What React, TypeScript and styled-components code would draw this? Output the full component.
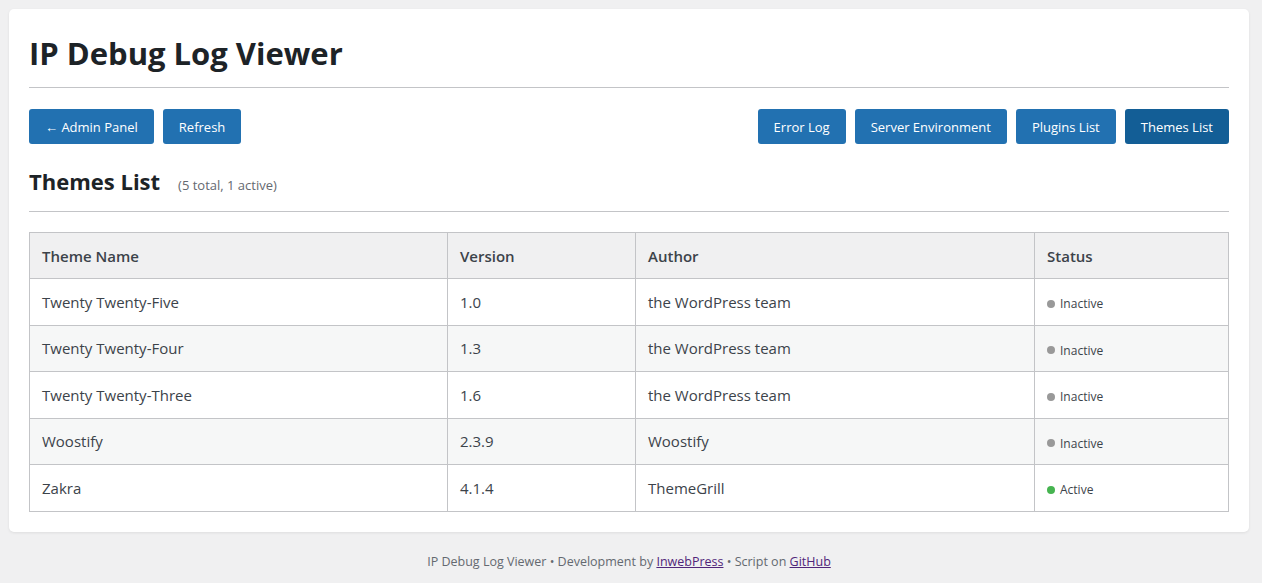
import React from "react";
import styled, { createGlobalStyle } from "styled-components";

const Global = createGlobalStyle`
  html, body { margin: 0; padding: 0; }
  body {
    background: #f0f0f1;
    font-family: "Segoe UI", "Open Sans", "Noto Sans", sans-serif;
    color: #3c434a;
  }
`;

const Page = styled.div`
  padding: 9px 13px 0 9px;
`;

const Card = styled.div`
  background: #fff;
  border-radius: 5px;
  box-shadow: 0 1px 3px rgba(0, 0, 0, 0.08);
  padding: 20px;
`;

const Title = styled.h1`
  margin: 0;
  padding: 5px 0 15px;
  font-size: 31px;
  line-height: 38px;
  font-weight: 700;
  color: #1d2327;
  border-bottom: 1px solid #c3c4c7;
`;

const Toolbar = styled.div`
  display: flex;
  justify-content: space-between;
  margin-top: 21px;
`;

const Group = styled.div`
  display: flex;
  gap: 9px;
`;

const Button = styled.button<{ $active?: boolean }>`
  height: 35px;
  padding: 0 16px;
  border: none;
  border-radius: 3px;
  background: ${(p) => (p.$active ? "#135e96" : "#2271b1")};
  color: #fff;
  font-family: inherit;
  font-size: 13px;
  cursor: pointer;
`;

const SectionHead = styled.div`
  display: flex;
  align-items: baseline;
  gap: 18px;
  margin-top: 22px;
  padding-bottom: 15px;
  border-bottom: 1px solid #c3c4c7;
`;

const SectionTitle = styled.h2`
  margin: 0;
  font-size: 22px;
  line-height: 30px;
  font-weight: 700;
  color: #1d2327;
`;

const Count = styled.span`
  font-size: 13px;
  color: #646970;
`;

const Table = styled.table`
  width: 100%;
  margin-top: 20px;
  border-collapse: collapse;
  table-layout: fixed;
  font-size: 15px;
`;

const Th = styled.th<{ $w?: number }>`
  width: ${(p) => (p.$w ? `${p.$w}px` : "auto")};
  height: 45px;
  padding: 0 12px;
  text-align: left;
  font-weight: 600;
  color: #3c434a;
  background: #f0f0f1;
  border: 1px solid #c3c4c7;
`;

const Row = styled.tr<{ $alt?: boolean }>`
  background: ${(p) => (p.$alt ? "#f6f7f7" : "#fff")};
`;

const Td = styled.td`
  height: 45.5px;
  padding: 0 12px;
  border: 1px solid #c3c4c7;
  color: #3c434a;
`;

const Status = styled.span`
  display: inline-flex;
  align-items: center;
  gap: 5px;
  font-size: 12px;
  margin-top: 4px;
`;

const Dot = styled.span<{ $active?: boolean }>`
  width: 8px;
  height: 8px;
  border-radius: 50%;
  background: ${(p) => (p.$active ? "#46b450" : "#999")};
`;

const Footer = styled.div`
  text-align: center;
  font-size: 12.5px;
  color: #646970;
  padding: 21px 0;
  a { color: #50267a; }
`;

const themes = [
  { name: "Twenty Twenty-Five", version: "1.0", author: "the WordPress team", active: false },
  { name: "Twenty Twenty-Four", version: "1.3", author: "the WordPress team", active: false },
  { name: "Twenty Twenty-Three", version: "1.6", author: "the WordPress team", active: false },
  { name: "Woostify", version: "2.3.9", author: "Woostify", active: false },
  { name: "Zakra", version: "4.1.4", author: "ThemeGrill", active: true },
];

export default function App() {
  return (
    <>
      <Global />
      <Page>
        <Card>
          <Title>IP Debug Log Viewer</Title>
          <Toolbar>
            <Group>
              <Button>← Admin Panel</Button>
              <Button>Refresh</Button>
            </Group>
            <Group>
              <Button>Error Log</Button>
              <Button>Server Environment</Button>
              <Button>Plugins List</Button>
              <Button $active>Themes List</Button>
            </Group>
          </Toolbar>
          <SectionHead>
            <SectionTitle>Themes List</SectionTitle>
            <Count>(5 total, 1 active)</Count>
          </SectionHead>
          <Table>
            <thead>
              <tr>
                <Th $w={393}>Theme Name</Th>
                <Th $w={163}>Version</Th>
                <Th $w={374}>Author</Th>
                <Th>Status</Th>
              </tr>
            </thead>
            <tbody>
              {themes.map((t, i) => (
                <Row key={t.name} $alt={i % 2 === 1}>
                  <Td>{t.name}</Td>
                  <Td>{t.version}</Td>
                  <Td>{t.author}</Td>
                  <Td>
                    <Status>
                      <Dot $active={t.active} />
                      {t.active ? "Active" : "Inactive"}
                    </Status>
                  </Td>
                </Row>
              ))}
            </tbody>
          </Table>
        </Card>
        <Footer>
          IP Debug Log Viewer • Development by <a href="#">InwebPress</a> • Script on{" "}
          <a href="#">GitHub</a>
        </Footer>
      </Page>
    </>
  );
}
